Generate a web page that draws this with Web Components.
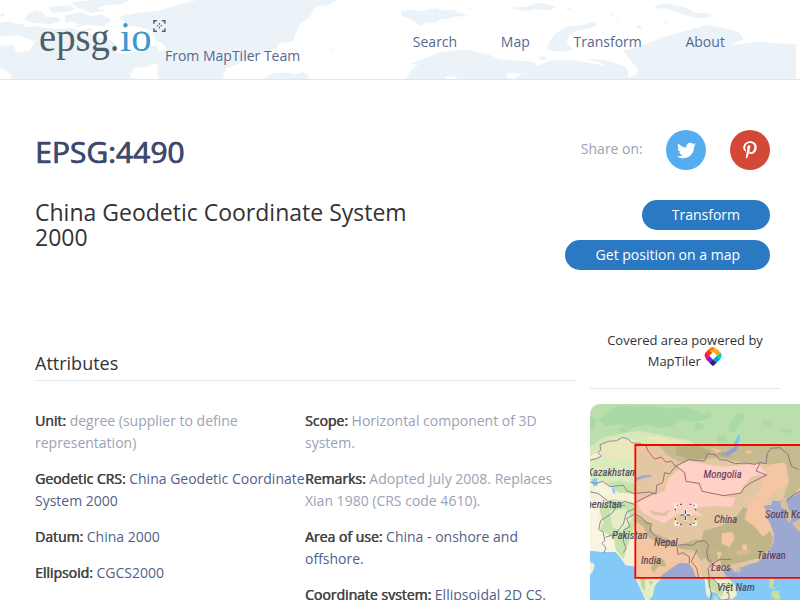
<!DOCTYPE html>
<html lang="en">
<head>
<meta charset="utf-8">
<title>EPSG:4490</title>
<style>
html{overflow:hidden}
body{margin:0;background:#fff;font:14px/22px "Open Sans",sans-serif;color:#333;overflow:hidden;height:600px}
</style>
</head>
<body>
<epsg-page></epsg-page>
<script>
function define(name, html) {
  const t = document.createElement('template');
  t.innerHTML = html;
  customElements.define(name, class extends HTMLElement {
    constructor() {
      super();
      this.attachShadow({mode: 'open'}).append(t.content.cloneNode(true));
    }
  });
}

define('world-backdrop', `
<style>:host{display:block}svg{display:block;width:800px;height:79px}</style>
<svg viewBox="0 0 2400 237" aria-hidden="true">
<g fill="#ebf3f8">
<path d="M0 68l25-4 18 6 28 2 4 10 32-4 60 10 44-4 28 8 30-8 32 8 25 26 22 15-6 18 28 12 60-12 8-16 32 4 10 20 24 10 16 30-18 12-40-22-28 14-30-2-14 30 40 12 14 20-8 17H60l-4-22-18-12-8-26-30-16z"/>
<path d="M84 42l26-12 18 6 10 14 34 2 12 12-30 8-50-2-30-10zM145 22l60-8 22 12-16 8-56 4zM195 45l46-8 36 12 26-6 32 16-22 20-56-4-34 8-28-16zM212 8l60-8h118l-24 12-50 4-30 12-50-2zM246 26l38-2 36 8-50 6zM0 45l8-8 8 10-14 3z"/>
<path d="M355 50l60-12 60-6 66-20 50-12h420l-16 10-40 6-16 16-10 20-28 20-14 30-8 22-40 6-10 14-50 20-60 26-40 14-14 40H482l-12-26 12-36-8-26 26-10-10-14-22-10-12-28-34-12-34-4z"/>
<path d="M790 235l24-14 46-4 20 6 40-3v17H800zM900 8l100-8-12 14-44 6-36 12-8 14-20 4 8 12-14 8 12 10-8 18-6-34z"/>
<path d="M1203 33l28-4 28 5 50-10 18 8 42-4-3 8 42 9-42 6-16 3-32 5-12 10-28-3-14 12-34-22-26-8zM1289 101l3-2v3zM1400 28l22-1-10 4zM1354 43l32-2-12 5z"/>
<path d="M1216 237l20-30 20-12-24-4 38-14 46-20 60-8 32 2 54 12 36 14 38 4 36 2 22 14-4 12-28 12-42-2 4 18z"/>
<path d="M1640 150l6-20 20-30 34-20 50-6 30-8 10 8-20 12-32 4-32 16-6 24 20 20-34 6z"/>
<path d="M1540 237l26-14-24-6 50-10 60-26 70 0 70 12 28 8-20-14-58-12 70 6 28 6 36 14 10 16-4 14 22-2 12-20-20-22-24-32 4-4 26-6 60-22 20-10 76-20 60-18 54 10 44 10 16 22-40 18 84-10 70 6 42 2v115H1540z"/>
<path d="M1526 24l50-4 40-12 20 4 32 8-20 10-52-2-12 6zM1694 28l22-6-10 8zM1828 44l16-4-8 8zM1844 64l12-3v6zM1964 18l36-8 60 14 40 22-36 2-60-20-38-4zM2070 38l50 2 26 8-34 6-42-4zM1984 66l16-3v10zM1620 170l12-2 10 8-20 5zM1576 184l26 2 10 18-24 4zM1914 76l12 2-4 8-14-2zM990 150l14-4-8 8z"/>
<path d="M900 212l20 14 8 11h-28z"/>
</g>
<g fill="#fff"><path d="M0 110l55-5 40 16-30 12-65 4zM36 130l70-8-16 30-40 6zM180 72l36-8 22 10-22 8zM250 92l50-6 40 24-34 6zM1334 232l12-4 28 3-6 6h-30zM1700 163l50 8 34 14-40-2-50-12z"/></g>
</svg>`);

define('epsg-logo', `
<style>:host{display:block;width:130px;height:50px}svg{display:block;overflow:visible}text{font:42px "Liberation Serif",serif}</style>
<svg width="130" height="50" viewBox="0 0 130 50">
<text x="4" y="32.500" fill="#4e6066" textLength="80.500" lengthAdjust="spacingAndGlyphs">epsg.</text>
<text x="85" y="32.500" fill="#3d98cd" textLength="31.500" lengthAdjust="spacingAndGlyphs">io</text>
<path d="M118.900 5.700v-3h3m5 0h3v3m0 4.500v3h-3m-5 0h-3v-3" fill="none" stroke="#4e6066" stroke-width="1.400"/>
<path d="M124.500 5v1.800m0 2v1.800m-2.800-2.800h1.800m2 0h1.800" stroke="#4e6066" stroke-width="1"/>
</svg>`);

define('nav-link', `<style>:host{display:block;color:#5a6791}</style><slot></slot>`);

define('site-header', `
<style>
:host{display:grid;height:79px;border-bottom:1px solid #e3e5e8;color:#5a6791}
world-backdrop,.bar{grid-area:1/1}
.bar{display:flex;z-index:1}
epsg-logo{margin:18px 0 0 35px}
.by{margin-top:45px}
nav{display:flex;gap:43.700px;margin:31px 0 0 112.600px}
</style>
<world-backdrop></world-backdrop>
<div class="bar"><epsg-logo></epsg-logo><div class="by">From MapTiler Team</div>
<nav><nav-link>Search</nav-link><nav-link>Map</nav-link><nav-link>Transform</nav-link><nav-link>About</nav-link></nav></div>`);

define('share-button', `
<style>:host{display:flex;width:40px;height:40px;border-radius:50%;align-items:center;justify-content:center;background:var(--c)}</style><slot></slot>`);

define('pill-button', `
<style>:host{display:block;height:30px;line-height:30px;padding:0 30px;border-radius:15px;background:#2b79c2;color:#fff}</style><slot></slot>`);

define('attr-item', `
<style>:host{display:block;color:#9ba2b5;white-space:nowrap}:host([link]){color:#515f8b}
b{font-weight:400;color:#444;-webkit-text-stroke:.2px #444;text-shadow:.4px 0 #444}</style>
<b><slot name="k"></slot></b> <slot></slot>`);

define('maptiler-mark', `
<style>:host{display:inline-block;width:18px;height:19px;vertical-align:0;margin-top:-8px}svg{display:block}</style>
<svg width="18" height="19" viewBox="0 0 18 19">
<path d="M4.700 2.200L9 6.400 5 10.500 1 6.300z" fill="#fb3a1b"/><path d="M9 0Q7 0 4.700 2.200L9 6.400l4.200-4.200Q11 0 9 0z" fill="#fbc935"/>
<path d="M4.700 2.200Q6.700 0 9 0l2 2.300L6.800 4.400z" fill="#ff7b16"/><path d="M13.200 2.200L9 4.300l4 4.300 4-2.600z" fill="#ffaa01"/>
<path d="M.5 9q0-1.700 1.300-3.500L6 9.700l-3.500 3z" fill="#f1175d"/><path d="M13 8.500l3.900-2.800Q18 8 17.500 9.500 17 11.500 15.600 12.800L11.700 9.800z" fill="#00cbdc"/>
<path d="M2.200 12.500L5.900 9l3.300 3.600L5.800 16z" fill="#761fe8"/><path d="M15.800 12.500l-3.600-3.300L9 12.600l3.500 3.400z" fill="#05a1c9"/>
<path d="M9 12.400l3.500 3.500L9 19.200l-3.500-3.300z" fill="#3a1888"/><path d="M9 4.900l3.700 3.800L9 12.500 5.300 8.700z" fill="#fff"/></svg>`);

define('area-map', `
<style>:host{display:block;width:210px;height:196px;border-radius:10px 0 0 0;overflow:hidden}svg{display:block}
text{font:italic 400 10.700px "Roboto Condensed",Roboto,sans-serif;fill:#4b4762;stroke:#4b4762;stroke-width:.15px}
.in text{fill:#643e58;stroke:#643e58}</style>
<svg width="210" height="196" viewBox="0 0 630 588">
<defs><clipPath id="box"><path d="M136 123h500v398H136z"/></clipPath></defs>
<path fill="#f6f0d8" d="M0 0h630v588H0z"/>
<path fill="#bbdfac" d="M0 0h630v130H0z"/>
<path fill="#a9d9a4" d="M60 15l30-12 50 5 40-6 60 12 40-8 45 18 25 22-40 8-40-6-25 20-40 4-35-10-50 12-30-14-45 6-20-22 20-12zM0 35l20 12-6 25-14 6zM315 55l30 5-6 16-25 4zM330 30l30-8 6 16-22 10zM425 50l15-24 20 0 2 22-18 14-10 26-24-10zM380 90l24 6 10 18-28 4zM520 48l26 8-6 10-24-6zM572 78l34-2 2 8-28 4zM90 68l30 6-14 12-20-6z"/>
<path fill="#d6e7b8" d="M0 130l40-30 60-12 50-8 70 14 36 8 40 6 20 15H60l-30 20-30 12z"/>
<path fill="#e9e8bd" d="M30 122l30-14 44-10 40 14-8 50-40 15-60-10zM150 98l60-2 30 12-30 10zM200 112l60-4 40 14h-90z"/>
<path fill="#dcebbe" d="M0 165l40-10 60 15 36-4v100l-60-6-40-30-36 0z"/>
<path fill="#c6e3ac" d="M50 236l40-6 46 10v30l-50-4zM30 300l40-14 66 10v70l-20 50-16 50-20-25-20-36-36-20 16-30-10-30z"/>
<path fill="#e5edc6" d="M60 320l46-6 20 30-26 40-34-16z"/>
<path fill="#faf5e2" d="M0 300l30 10-6 36 8 30 40 30 6 40-78 0zM10 250l30 0 20 20-20 8z"/>
<path fill="#84caf8" d="M0 440l36 4 40 0 18 20 12 20 30 4v33h20l-8 0 4 32 14 36H0v-78l6-4 8-20-4-10-10-2zM8 224l12-2 4 20-12 6-6-12zM66 252l8 2 2 16-8-4z"/>
<path fill="#84caf8" d="M225 519h410v70H176l10-14 4-28 14-18z"/>
<path fill="#e6edc4" d="M134 519h88l-18 14-10 14-6 30-12 12-12-6-14-30z"/><path fill="#b9d89a" d="M150 521l16 0-2 40-10-14zM176 530l14 2-8 14z"/>
<path fill="#eff1cc" d="M343 519h70l22 24 6 30-14 12h-34l-10-16-20-8-6 22-8-10z"/><path fill="#c4dea4" d="M350 521h20l14 24 20 12-8 22-20-16-22-14zM414 530l16 16 2 20-14-24zM538 521l16 2-6 22 10 12-20-6zM544 562l22-2 6 24-16 4-12-12zM370 574l14 4 0 10h-14z"/>
<path fill="#74c4f8" d="M444 95l6-4-2 20-8 14h-12z"/>
<g clip-path="url(#box)">
<path fill="#e3c6a2" d="M136 123h500v400H136z"/>
<path fill="#c6ba90" d="M205 123h431v90l-60-28-50-5-36-2-60-8-48-8-60 6-34 14-50-24z"/>
<path fill="#b9ad80" d="M260 128l70-2 30 16-14 22-50 2-40-14zM370 134l26 6 34 20-40-2z"/>
<path fill="#f2c49f" d="M136 123l34 2 28 30 40 0 10 20-44 2-30-30-38-6zM186 240l40-14 34 8-40 14-34 4zM360 130l40 10-20 8zM462 142l24-2-6 12z"/>
<path fill="#f4c6a3" d="M512 208l34-28 50-6 16 20-20 50-30 14-36 30-30-8 20-34z"/>
<path fill="#c6ba90" d="M536 140l54 0 40 54v54l-34 40-16-4 16-50-6-46-20-30-34-4z"/>
<path fill="#ffd1c5" d="M262 186l34-16 60 12 50 6 60-6 40-2 24 28-46 10-20 24-14 24-46 10-68-14-10-22-36-8-12-28z"/>
<path fill="#ffcfc3" d="M140 296l50-24 34-10 12-40 34-28 20 38 38 12 10 20 62 12 36 6-10 26-60-2-60 6 34 24-74-8-44 30-40-18-24-16z"/>
<path fill="#ddc2a0" d="M176 318l40 10 26-12-14 20-40-2z"/>
<path fill="#f3c7a3" d="M136 340l24 20 24 10 0 34 60 26 36 6-8 40-54 26-12 18h-70z"/>
<path fill="#c2b68b" d="M138 336l40 20 12 30 50 22 20 22-36-4-46-24-20-36-20-12zM198 460l24 8 6 20-22-2-14 20-10-14zM264 424l56-18 30 8 4 40-20 16-20-30-46-6z"/>
<path fill="#f5c8a3" d="M284 446l28 0 16 30 12 46h-24l-14-40-22-4z"/>
<path fill="#c0b488" d="M342 380l50-14 40-20 28-36 26 6 10 36 40 20 14 30-10 34-34 26-56 14-50 10-30 10-30-40-10-36z"/>
<path fill="#f4c6a1" d="M486 284l60 6-22 16 18 12-14 20 20 38-30 22-24-30-30-22 10-38zM396 388l32-4 6 20-16 26-24-12zM456 424l14-4 4 26-14 2zM380 440l16 8-10 20zM360 474l30-4 10 36-30 0z"/>
<path fill="#d9b996" d="M440 440l44-4-8 14-34 4z"/>
<path fill="#9ca7d2" d="M640 262l-36 16-28 14-28-2-4 12-24 4 8 12 18-4-4 12-14 14 12 16 12 34 0 22-18 34-30 28-30 8-30 12-10 12-8-14-22-2-2 16 12 22h236zM206 522l40-30 20-14 30 0 12 16 10 28zM138 222l22-8 26 0-2 4-22 4-18 6-6 6z"/>
<path fill="#d9be9c" d="M572 288l16-10 6 30 14 28-8 22-10-10 0-26-18-14zM606 358l34-18v50l-20-14zM440 492l14-8-4 22-10-2zM536 452l10-6-2 24-8-8z"/>
<path fill="#909fd2" d="M440 123h8l-10 18-24 14-18-2 22-14z"/>
</g>
<g fill="none" stroke="#98717b" stroke-width="3" stroke-linejoin="round">
<path d="M166 121l8 20 20 24 20-6 14 16 16-4 12 16 40-20 48 4 10-22 24 4 10 14 22 2 26 10 30-2 30 4 12-6 20 4 4-30 10-16 28-2 24 20 10 36 22 10M258 186l26 20 4 26 40 6 8 24 66 13 52-8 8-16 20-14 48-24-32-12 12-24M258 186l-20 24-14-4-6 30-18 8-2 26-20-6-42 4M634 260l-24 12-20 20M136 296l30-16 30-14M136 330l20 12 12 14 16 4-4 20 18 18 26 14 22 2M264 424l20-2 24 2 16-12 20-2 12 14-6 20 4 20 12 14 22 16M250 410l12 20 2 22 14-6 20 12 0 20M322 436l-18 36 16 20 6 30M366 480l24-14 34 0M366 480l-12 14 4 26"/></g>
<g fill="none" stroke="#8c8a98" stroke-width="3" stroke-linejoin="round">
<path d="M0 168l20-4 14-8-10-10 8-8-2-16 26-10 24-2 18-10 18 6 8 10 24 2 10 4M0 234l16 4 22-6 22 16 40-4 10 16 26 10M0 264l24 4 28 22 32 14 20-12 32 10M32 350l-6 26 14 8 4 26-8 8 12 14-8 16M32 350l34-22 14-20 26-4M134 314l-24 10-10 36-24 30-30 10M134 330l-24 14 10 24-20 10 0 34 8 20-8 14"/>
<path d="M357 521l2 28 6 24-4 15M366 521l26 28 10-6 12 14 4 26-14 6"/></g>
<path d="M640 123H136v398.500h504" fill="none" stroke="#f00" stroke-width="5.500"/>
<g transform="scale(3) translate(-590 -404)">
<text x="587.300" y="476.300">Kazakhstan</text><text x="584" y="507.500">menistan</text><text x="612" y="538.800">Pakistan</text><text x="717" y="591">Việt Nam</text>
<g class="in"><text x="703.500" y="478.300">Mongolia</text><text x="714" y="523">China</text><text x="765" y="517.500">South Korea</text><text x="757" y="559">Taiwan</text><text x="654" y="545.800">Nepal</text><text x="641" y="564">India</text><text x="711" y="571.300">Laos</text></g></g>
<path d="M257 314v-12h12m36 0h12v12m0 36v12h-12m-36 0h-12v-12m30-36v36m-18-18h36" fill="none" stroke="#fff" stroke-width="7" stroke-opacity=".75"/>
<path d="M256 319v-5m4-8l4-4m6-1h5m24 0h5m6 1l4 4m3 8v5m0 24v5m-3 8l-4 4m-6 1h-5m-24 0h-5m-6-1l-4-4m-4-8v-5m30-25v12m0 6v12m-15-15h12m6 0h12" fill="none" stroke="#333" stroke-width="3"/>
</svg>`);

define('epsg-page', `
<style>
:host{display:block}
.top{display:flex;justify-content:space-between;padding:50px 30px 0 35px;height:190px}
h1{margin:2px 0 0;font:30px/40px "Open Sans",sans-serif;color:#3b4a6e;-webkit-text-stroke:.5px #3b4a6e;text-shadow:.5px 0 #3b4a6e}
h2{margin:27.500px 0 0;font:23px/25px "Open Sans",sans-serif;width:390px;color:#333}
.side{display:flex;flex-direction:column;align-items:flex-end;gap:10px}
.share{display:flex;gap:24px;align-items:center;margin-bottom:20px;color:#9ba2b5}
.share span{margin:-2px -.8px 0 0}
pill-button:last-child{padding-left:30.600px}
.main{display:grid;grid-template-columns:540px 210px;column-gap:15px;padding-left:35px}
h3{margin:33px 0 0;height:27px;font:18px/20px "Open Sans",sans-serif;border-bottom:1px solid #e3e5e8}
.cols{display:grid;grid-template-columns:270px 270px;margin-top:29px}
.cols>div{display:flex;flex-direction:column;gap:14px}
.cov{width:190px;box-sizing:border-box;height:69px;font-size:13px;line-height:21px;text-align:center;border-bottom:1px solid #e3e5e8;margin-bottom:15px;padding-top:10px}
</style>
<site-header></site-header>
<div class="top"><div><h1>EPSG:4490</h1><h2>China Geodetic Coordinate System 2000</h2></div>
<div class="side"><div class="share"><span>Share on:</span>
<share-button style="--c:#55acee"><svg width="19" height="19" viewBox="0 0 512 512"><path fill="#fff" d="M459.370 151.716c.325 4.548.325 9.097.325 13.645 0 138.720-105.583 298.558-298.558 298.558-59.452 0-114.680-17.219-161.137-47.106 8.447.974 16.568 1.299 25.340 1.299 49.055 0 94.213-16.568 130.274-44.832-46.132-.975-84.792-31.188-98.112-72.772 6.498.974 12.995 1.624 19.818 1.624 9.421 0 18.843-1.300 27.614-3.573-48.081-9.747-84.143-51.980-84.143-102.985v-1.299c13.969 7.797 30.214 12.670 47.431 13.319-28.264-18.843-46.781-51.005-46.781-87.391 0-19.492 5.197-37.360 14.294-52.954 51.655 63.675 129.300 105.258 216.365 109.807-1.624-7.797-2.599-15.918-2.599-24.040 0-57.828 46.782-104.934 104.934-104.934 30.213 0 57.502 12.670 76.670 33.137 23.715-4.548 46.456-13.320 66.599-25.340-7.798 24.366-24.366 44.833-46.132 57.827 21.117-2.273 41.584-8.122 60.426-16.243-14.292 20.791-32.161 39.308-52.628 54.253z"/></svg></share-button>
<share-button style="--c:#d34836"><svg width="14" height="18" viewBox="0 0 384 512"><path fill="#fff" d="M204 6.500C101.400 6.500 0 74.900 0 185.600 0 256 39.600 296 63.600 296c9.900 0 15.600-27.600 15.600-35.400 0-9.300-23.700-29.100-23.700-67.800 0-80.400 61.200-137.400 140.400-137.400 68.100 0 118.500 38.700 118.500 109.800 0 53.100-21.300 152.700-90.300 152.700-24.900 0-46.200-18-46.200-43.800 0-37.800 26.400-74.400 26.400-113.400 0-66.200-93.900-54.200-93.900 25.800 0 16.800 2.100 35.400 9.600 50.700-13.800 59.400-42 147.900-42 209.100 0 18.900 2.700 37.500 4.500 56.400 3.400 3.800 1.700 3.400 6.900 1.500 50.400-69 48.600-82.500 71.400-172.800 12.300 23.400 44.100 36 69.300 36 106.200 0 153.900-103.500 153.900-196.800C384 71.300 298.200 6.500 204 6.500z"/></svg></share-button></div>
<pill-button>Transform</pill-button><pill-button>Get position on a map</pill-button></div></div>
<div class="main"><div><h3>Attributes</h3><div class="cols"><div>
<attr-item><span slot="k">Unit:</span>degree (supplier to define<br>representation)</attr-item>
<attr-item link><span slot="k">Geodetic CRS:</span>China Geodetic Coordinate<br>System 2000</attr-item>
<attr-item link><span slot="k">Datum:</span>China 2000</attr-item>
<attr-item link><span slot="k">Ellipsoid:</span>CGCS2000</attr-item></div><div>
<attr-item><span slot="k">Scope:</span>Horizontal component of 3D<br>system.</attr-item>
<attr-item><span slot="k">Remarks:</span>Adopted July 2008. Replaces<br>Xian 1980 (CRS code 4610).</attr-item>
<attr-item link><span slot="k">Area of use:</span>China - onshore and<br>offshore.</attr-item>
<attr-item link><span slot="k">Coordinate system:</span>Ellipsoidal 2D CS.</attr-item></div></div></div>
<div><div class="cov">Covered area powered by<br>MapTiler <maptiler-mark></maptiler-mark></div><area-map></area-map></div></div>`);
</script>
</body>
</html>
